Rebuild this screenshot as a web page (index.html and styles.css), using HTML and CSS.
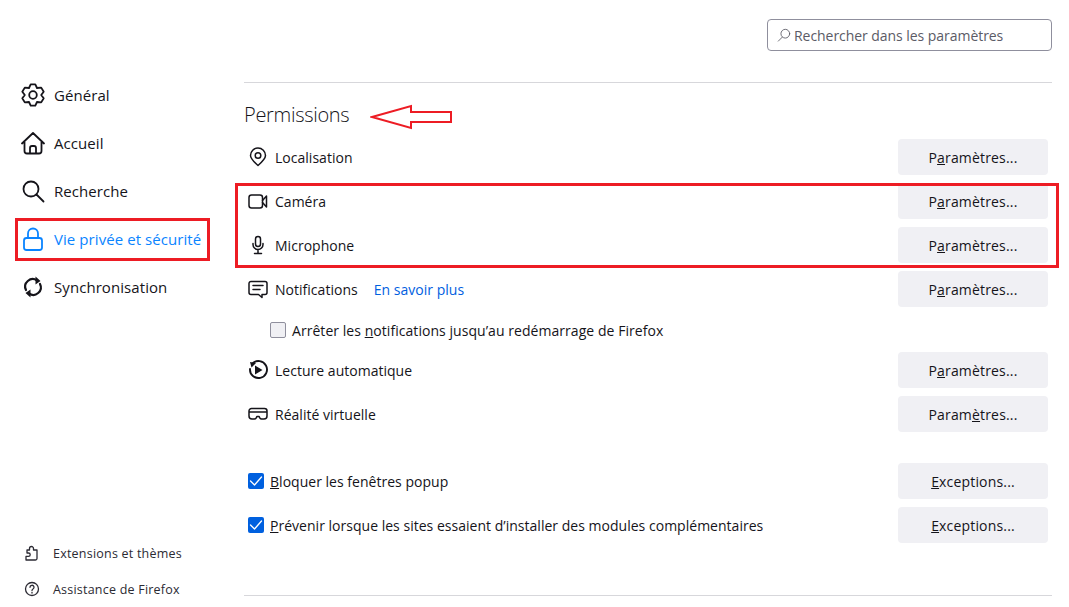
FILE: index.html
```html
<!DOCTYPE html>
<html lang="fr">
<head>
<meta charset="utf-8">
<title>Paramètres</title>
<link rel="stylesheet" href="styles.css">
</head>
<body>
<aside class="sidebar">
  <nav class="nav">
    <a class="nav-item"><svg class="nav-icon" viewBox="0 0 24 24"><polygon points="9.700,1.300 14.300,1.300 16,5 20.200,4.600 22.700,8.800 20.200,12 22.700,15.200 20.200,19.400 16,19 14.300,22.700 9.700,22.700 8,19 3.800,19.400 1.300,15.200 3.800,12 1.300,8.800 3.800,4.600 8,5"/><circle cx="12" cy="12" r="3.800"/></svg>Général</a>
    <a class="nav-item"><svg class="nav-icon" viewBox="0 0 24 24"><path d="M1 12.500 12 2l11 10.500M3.500 10v10a2.500 2.500 0 0 0 2.500 2.500h12a2.500 2.500 0 0 0 2.500-2.500V10M9 22.500V17a2 2 0 0 1 2-2h2a2 2 0 0 1 2 2v5.500"/></svg>Accueil</a>
    <a class="nav-item"><svg class="nav-icon" viewBox="0 0 24 24"><circle cx="10" cy="10" r="7.500"/><path d="m15.500 15.500 7 7"/></svg>Recherche</a>
    <a class="nav-item nav-active"><svg class="nav-icon" viewBox="0 0 24 24"><rect x="3" y="11" width="18" height="12" rx="2.500"/><path d="M7 11V6.500a5 5 0 0 1 10 0V11"/></svg>Vie privée et sécurité</a>
    <a class="nav-item"><svg class="nav-icon" viewBox="0 0 24 24"><path class="thick" d="M5 15A7.500 7.500 0 0 1 16 5.500M19 9a7.500 7.500 0 0 1-11 9.500"/><path class="solid" d="M14.500 1.500 19.500 6l-5 3.500zM9.500 22.500 4.500 18l5-3.500z"/></svg>Synchronisation</a>
  </nav>
  <div class="foot">
    <a class="foot-item"><svg class="foot-icon" viewBox="0 0 16 16"><path d="M2 15h9.500a1.500 1.500 0 0 0 1.500-1.500V5H9.500V3.500a2 2 0 0 0-4 0V5H3v3h1.500a1.700 1.700 0 0 1 0 3.400H2z"/></svg>Extensions et thèmes</a>
    <a class="foot-item"><svg class="foot-icon" viewBox="0 0 16 16"><circle cx="8" cy="8" r="6.500"/><path d="M6 6.300a2 2 0 1 1 3 1.700c-.7.400-1 .8-1 1.500"/><path d="M8 11.300v.7"/></svg>Assistance de Firefox</a>
  </div>
</aside>

<main class="main">
  <div class="search-bar">
    <div class="search"><svg class="search-icon" viewBox="0 0 16 16"><circle cx="9.500" cy="6.500" r="5"/><path d="M6 10.500 1.500 15"/></svg>Rechercher dans les paramètres</div>
  </div>
  <hr class="rule">
  <h1 class="title">Permissions</h1>

  <div class="row">
    <div class="label"><svg class="row-icon" viewBox="0 0 20 20"><path d="M10 18.500C6 15 2.500 11.800 2.500 8.500a7.500 7.500 0 0 1 15 0c0 3.300-3.500 6.500-7.500 10z"/><circle cx="10" cy="8.500" r="2.800"/></svg>Localisation</div>
    <button class="btn">P<u>a</u>ramètres...</button>
  </div>
  <div class="row">
    <div class="label"><svg class="row-icon" viewBox="0 0 20 20"><rect x="1" y="4" width="13.500" height="13" rx="2.500"/><path d="M14.500 9.500 18.500 5v11l-4-4.500"/></svg>Caméra</div>
    <button class="btn">P<u>a</u>ramètres...</button>
  </div>
  <div class="row">
    <div class="label"><svg class="row-icon" viewBox="0 0 20 20"><rect x="7.500" y="1.500" width="5" height="10" rx="2.500"/><path d="M5 8.500v1a5 5 0 0 0 10 0v-1M10 14.500v4M6.500 18.500h7"/></svg>Microphone</div>
    <button class="btn">P<u>a</u>ramètres...</button>
  </div>
  <div class="row">
    <div class="label"><svg class="row-icon" viewBox="0 0 20 20"><path d="M3 2.500h14a2 2 0 0 1 2 2v9a2 2 0 0 1-2 2h-3v3l-3.500-3H3a2 2 0 0 1-2-2v-9a2 2 0 0 1 2-2zM5 6.500h10M5 10.500h7"/></svg>Notifications<a class="link">En savoir plus</a></div>
    <button class="btn">P<u>a</u>ramètres...</button>
  </div>
  <label class="check-row">
    <span class="box"></span>
    <span>Arrêter les <u>n</u>otifications jusqu’au redémarrage de Firefox</span>
  </label>
  <div class="row">
    <div class="label"><svg class="row-icon row-icon-bold" viewBox="0 0 20 20"><path d="M4.500 3.500A8.500 8.500 0 1 1 2 9"/><path class="solid" d="M2 2l6 1-4.500 4.500zM7 5.500v9l7.500-4.500z"/></svg>Lecture automatique</div>
    <button class="btn">P<u>a</u>ramètres...</button>
  </div>
  <div class="row">
    <div class="label"><svg class="row-icon" viewBox="0 0 20 20"><path d="M3.500 4.500h13a2.500 2.500 0 0 1 2.500 2.500v5a3 3 0 0 1-3 3h-2.500a2 2 0 0 1-1.500-.8L11 12.500H9l-1 1.700a2 2 0 0 1-1.500.8H4a3 3 0 0 1-3-3V7a2.500 2.500 0 0 1 2.500-2.500zM1.500 8h17"/></svg>Réalité virtuelle</div>
    <button class="btn">Param<u>è</u>tres...</button>
  </div>

  <div class="row row-gap">
    <label class="label"><span class="box box-on"><svg viewBox="0 0 16 16"><path d="m2.500 8 4 4 7-8"/></svg></span><span><u>B</u>loquer les fenêtres popup</span></label>
    <button class="btn"><u>E</u>xceptions...</button>
  </div>
  <div class="row">
    <label class="label"><span class="box box-on"><svg viewBox="0 0 16 16"><path d="m2.500 8 4 4 7-8"/></svg></span><span><u>P</u>révenir lorsque les sites essaient d’installer des modules complémentaires</span></label>
    <button class="btn"><u>E</u>xceptions...</button>
  </div>
  <hr class="rule rule-end">
</main>

<div class="mark mark-nav"></div>
<div class="mark mark-rows"></div>
<svg class="mark-arrow" viewBox="0 0 84 26"><polygon points="2,13 41,2 41,8 81,8 81,18 41,18 41,24"/></svg>
</body>
</html>
```
FILE: styles.css
```css
* { box-sizing: border-box; }
html, body { margin: 0; height: 607px; overflow: hidden; }
body {
  display: flex;
  background: #fff;
  color: #15141a;
  font-family: "Open Sans", "Noto Sans", sans-serif;
  font-size: 14px;
}
svg { fill: none; stroke: currentColor; stroke-linecap: round; stroke-linejoin: round; }
svg .solid { fill: currentColor; stroke: none; }
svg .thick { stroke-width: 2.200; }

.sidebar { width: 244px; flex: none; display: flex; flex-direction: column; padding-top: 71px; }
.nav { display: flex; flex-direction: column; }
.nav-item { height: 48px; display: flex; align-items: center; padding-left: 21px; font-size: 15px; letter-spacing: .07px; }
.nav-icon { width: 24px; height: 24px; margin-right: 9px; stroke-width: 1.800; flex: none; }
.nav-active { color: #0a84ff; }
.foot { margin-top: auto; display: flex; flex-direction: column; }
.foot-item { height: 36px; display: flex; align-items: center; padding-left: 24px; font-size: 12.500px; letter-spacing: .22px; color: #2b2a33; }
.foot-icon { width: 16px; height: 16px; margin-right: 13px; stroke-width: 1.300; flex: none; }

.main { width: 808px; flex: none; display: flex; flex-direction: column; padding-top: 19px; }
.search-bar { display: flex; justify-content: flex-end; }
.search {
  width: 285px; height: 32px;
  display: flex; align-items: center;
  padding-left: 9px;
  border: 1px solid #8f8f9d; border-radius: 4px;
  color: #5b5b66;
  font-size: 14px; letter-spacing: -.05px;
}
.search-icon { width: 14px; height: 14px; margin-right: 3px; stroke-width: 1; color: #5b5b66; }
.rule { width: 100%; height: 1px; margin: 0; border: 0; background: #d7d7db; }
.search-bar + .rule { margin-top: 31px; }
.rule-end { margin-top: 44px; }
.title { margin: 16px 0 0; height: 40px; font-size: 20px; font-weight: 300; line-height: 32px; letter-spacing: -.3px; }

.row { height: 36px; margin-bottom: 8px; display: flex; align-items: center; justify-content: space-between; padding-right: 4px; letter-spacing: .02px; }
.row-gap { margin-top: 23px; }
.label { display: flex; align-items: center; padding-left: 4px; }
.row-icon { width: 20px; height: 20px; margin-right: 7px; stroke-width: 1.500; flex: none; }
.row-icon-bold { stroke-width: 1.900; }
.link { margin-left: 16px; color: #0060df; }
.btn {
  width: 150px; height: 36px;
  border: 0; border-radius: 4px;
  background: #f0f0f4; color: #15141a;
  font: inherit; letter-spacing: .17px;
}
.check-row { height: 30px; margin-bottom: 7px; display: flex; align-items: center; padding-left: 26px; letter-spacing: .05px; }
.box { width: 16px; height: 16px; margin-right: 6px; border: 1px solid #8f8f9d; border-radius: 2px; background: #f0f0f4; flex: none; display: flex; }
.box-on { border: 0; background: #0060df; color: #fff; }
.box-on svg { width: 16px; height: 16px; stroke-width: 1.300; }

.mark { position: absolute; border: 3px solid #ed1c24; }
.mark-nav { left: 15px; top: 218px; width: 195px; height: 43px; }
.mark-rows { left: 235px; top: 183px; width: 824px; height: 85px; }
.mark-arrow { position: absolute; left: 370px; top: 104px; width: 84px; height: 26px; color: #ed1c24; stroke-width: 2; stroke-linecap: butt; stroke-linejoin: miter; }
```
